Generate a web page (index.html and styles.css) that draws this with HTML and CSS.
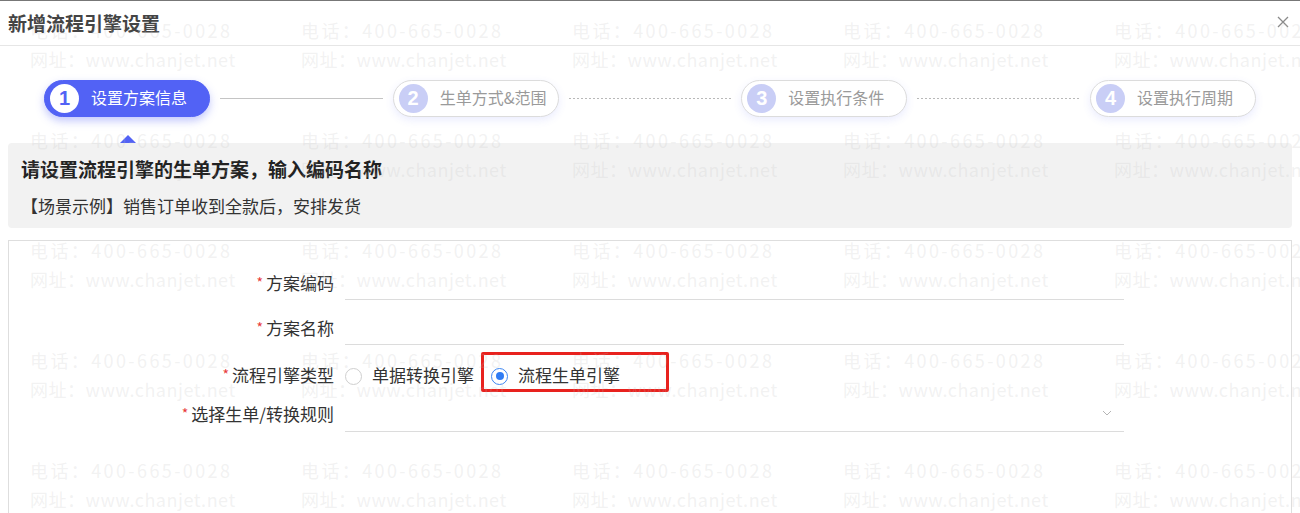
FILE: index.html
```html
<!DOCTYPE html>
<html lang="zh-CN">
<head>
    <meta charset="UTF-8">
    <title>新增流程引擎设置</title>
    <link rel="stylesheet" href="styles.css">
</head>
<body>
    <div class="dialog">
        <!-- Header -->
        <div class="dialog-header">
            <h1 class="dialog-title">新增流程引擎设置</h1>
            <button class="close-btn" aria-label="关闭">
                <svg width="12" height="12" viewBox="0 0 12 12"><path d="M1 1L11 11M11 1L1 11" stroke="#8a8a8a" stroke-width="1.3" fill="none"/></svg>
            </button>
        </div>

        <!-- Steps -->
        <div class="steps">
            <div class="step active"><span class="step-num">1</span><span class="step-text">设置方案信息</span></div>
            <div class="connector solid"></div>
            <div class="step"><span class="step-num">2</span><span class="step-text">生单方式&amp;范围</span></div>
            <div class="connector"></div>
            <div class="step"><span class="step-num">3</span><span class="step-text">设置执行条件</span></div>
            <div class="connector"></div>
            <div class="step"><span class="step-num">4</span><span class="step-text">设置执行周期</span></div>
        </div>

        <!-- Tip box -->
        <div class="tip-box">
            <div class="tip-title">请设置流程引擎的生单方案，输入编码名称</div>
            <div class="tip-desc">【场景示例】销售订单收到全款后，安排发货</div>
        </div>

        <!-- Form -->
        <div class="form-box">
            <div class="form-row">
                <label class="form-label"><i>*</i>方案编码</label>
                <div class="form-field"></div>
            </div>
            <div class="form-row">
                <label class="form-label"><i>*</i>方案名称</label>
                <div class="form-field"></div>
            </div>
            <div class="form-row radio-row">
                <label class="form-label"><i>*</i>流程引擎类型</label>
                <div class="radio-group">
                    <span class="radio-item"><span class="radio"></span>单据转换引擎</span>
                    <span class="radio-item highlight"><span class="radio checked"></span>流程生单引擎</span>
                </div>
            </div>
            <div class="form-row select-row">
                <label class="form-label"><i>*</i>选择生单/转换规则</label>
                <div class="form-field select">
                    <svg class="chevron" width="10" height="6" viewBox="0 0 10 6"><path d="M1 1L5 5L9 1" stroke="#b5b5b5" stroke-width="1" fill="none"/></svg>
                </div>
            </div>
        </div>
    </div>

    <!-- Watermark overlay -->
    <div class="watermark">
        <div class="wm"><span class="tel">电话：400-665-0028</span><span class="url">网址：www.chanjet.net</span></div>
        <div class="wm"><span class="tel">电话：400-665-0028</span><span class="url">网址：www.chanjet.net</span></div>
        <div class="wm"><span class="tel">电话：400-665-0028</span><span class="url">网址：www.chanjet.net</span></div>
        <div class="wm"><span class="tel">电话：400-665-0028</span><span class="url">网址：www.chanjet.net</span></div>
        <div class="wm"><span class="tel">电话：400-665-0028</span><span class="url">网址：www.chanjet.net</span></div>
        <div class="wm"><span class="tel">电话：400-665-0028</span><span class="url">网址：www.chanjet.net</span></div>
        <div class="wm"><span class="tel">电话：400-665-0028</span><span class="url">网址：www.chanjet.net</span></div>
        <div class="wm"><span class="tel">电话：400-665-0028</span><span class="url">网址：www.chanjet.net</span></div>
        <div class="wm"><span class="tel">电话：400-665-0028</span><span class="url">网址：www.chanjet.net</span></div>
        <div class="wm"><span class="tel">电话：400-665-0028</span><span class="url">网址：www.chanjet.net</span></div>
        <div class="wm"><span class="tel">电话：400-665-0028</span><span class="url">网址：www.chanjet.net</span></div>
        <div class="wm"><span class="tel">电话：400-665-0028</span><span class="url">网址：www.chanjet.net</span></div>
        <div class="wm"><span class="tel">电话：400-665-0028</span><span class="url">网址：www.chanjet.net</span></div>
        <div class="wm"><span class="tel">电话：400-665-0028</span><span class="url">网址：www.chanjet.net</span></div>
        <div class="wm"><span class="tel">电话：400-665-0028</span><span class="url">网址：www.chanjet.net</span></div>
        <div class="wm"><span class="tel">电话：400-665-0028</span><span class="url">网址：www.chanjet.net</span></div>
        <div class="wm"><span class="tel">电话：400-665-0028</span><span class="url">网址：www.chanjet.net</span></div>
        <div class="wm"><span class="tel">电话：400-665-0028</span><span class="url">网址：www.chanjet.net</span></div>
        <div class="wm"><span class="tel">电话：400-665-0028</span><span class="url">网址：www.chanjet.net</span></div>
        <div class="wm"><span class="tel">电话：400-665-0028</span><span class="url">网址：www.chanjet.net</span></div>
        <div class="wm"><span class="tel">电话：400-665-0028</span><span class="url">网址：www.chanjet.net</span></div>
        <div class="wm"><span class="tel">电话：400-665-0028</span><span class="url">网址：www.chanjet.net</span></div>
        <div class="wm"><span class="tel">电话：400-665-0028</span><span class="url">网址：www.chanjet.net</span></div>
        <div class="wm"><span class="tel">电话：400-665-0028</span><span class="url">网址：www.chanjet.net</span></div>
        <div class="wm"><span class="tel">电话：400-665-0028</span><span class="url">网址：www.chanjet.net</span></div>
    </div>
</body>
</html>
```

FILE: styles.css
```css
* {
    margin: 0;
    padding: 0;
    box-sizing: border-box;
}

body {
    font-family: "Noto Sans CJK SC", "Noto Sans", sans-serif;
    color: #333;
    background: #fff;
    overflow: hidden;
    height: 100vh;
}

.dialog {
    border-top: 1px solid #777;
    height: 100%;
    display: flex;
    flex-direction: column;
}

/* Header */
.dialog-header {
    height: 45px;
    flex-shrink: 0;
    border-bottom: 1px solid #e6e6e6;
    display: flex;
    align-items: center;
    justify-content: space-between;
    padding: 0 11px 0 8px;
}

.dialog-title {
    font-size: 19px;
    font-weight: bold;
    color: #444;
    line-height: 44px;
}

.close-btn {
    background: none;
    border: none;
    width: 12px;
    height: 12px;
    display: flex;
    margin-bottom: 2px;
}

/* Steps */
.steps {
    display: flex;
    align-items: center;
    padding: 34px 44px 0 44px;
}

.step {
    position: relative;
    width: 166px;
    height: 37px;
    border-radius: 19px;
    border: 1px solid #dcdcdc;
    background: #fff;
    display: flex;
    align-items: center;
    padding-left: 5px;
    box-shadow: 0 3px 8px rgba(82, 98, 245, 0.12);
    flex-shrink: 0;
}

.step-num {
    width: 29px;
    height: 29px;
    border-radius: 50%;
    background: #c9cef6;
    color: #fff;
    font-family: "Liberation Sans", Arial, sans-serif;
    font-weight: bold;
    font-size: 20px;
    display: flex;
    align-items: center;
    justify-content: center;
}

.step-text {
    margin-left: 12px;
    font-size: 16px;
    line-height: 22px;
    margin-bottom: 3px;
    color: #9a9a9a;
}

.step.active {
    background: #5262f5;
    border-color: #5262f5;
    box-shadow: 0 4px 9px rgba(82, 98, 245, 0.35);
}

.step.active .step-num {
    background: #fff;
    color: #5262f5;
}

.step.active .step-text {
    color: #fff;
}

.step.active::after {
    content: "";
    position: absolute;
    left: 75px;
    bottom: -27px;
    border-left: 8px solid transparent;
    border-right: 8px solid transparent;
    border-bottom: 8px solid #5262f5;
}

.connector {
    flex: 1;
    height: 1px;
    margin: 0 10px;
    background: repeating-linear-gradient(to right, #b8b8b8 0 2px, transparent 2px 4px);
}

.connector.solid {
    background: #c4c4c4;
}

/* Tip box */
.tip-box {
    margin: 26px 8px 0;
    background: #f2f2f2;
    border-radius: 4px;
    padding: 12px 13px 9px;
}

.tip-title {
    font-size: 19px;
    font-weight: bold;
    color: #222;
    line-height: 28px;
}

.tip-desc {
    font-size: 17px;
    color: #333;
    line-height: 26px;
    margin-top: 10px;
}

/* Form */
.form-box {
    flex: 1;
    margin: 12px 8px 0;
    border: 1px solid #dedede;
    border-bottom: none;
    padding-top: 14px;
    overflow: hidden;
}

.form-row {
    display: flex;
    align-items: flex-end;
    height: 45px;
}

.form-label {
    width: 325px;
    text-align: right;
    font-size: 17px;
    line-height: 24px;
    color: #333;
    padding-bottom: 5px;
    flex-shrink: 0;
}

.form-label i {
    font-style: normal;
    color: #e83a3a;
    font-size: 14px;
    margin-right: 3px;
    vertical-align: 2px;
}

.form-field {
    margin-left: 11px;
    width: 779px;
    height: 100%;
    border-bottom: 1px solid #dcdcdc;
    position: relative;
}

.radio-row {
    height: 43px;
}

.radio-row .form-label {
    padding-bottom: 1px;
}

.radio-group {
    margin-left: 11px;
    display: flex;
    align-items: center;
    padding-bottom: 1px;
    font-size: 17px;
    line-height: 24px;
}

.radio-item {
    display: flex;
    align-items: center;
    position: relative;
}

.radio-item + .radio-item {
    margin-left: 17px;
}

.radio {
    width: 17px;
    height: 17px;
    border-radius: 50%;
    border: 1px solid #cfcfcf;
    margin-right: 10px;
    margin-top: 2px;
    background: #fff;
    display: flex;
    align-items: center;
    justify-content: center;
}

.radio.checked {
    border-color: #3d86f2;
}

.radio.checked::after {
    content: "";
    width: 8px;
    height: 8px;
    border-radius: 50%;
    background: #2f7cf4;
}

.highlight::before {
    content: "";
    position: absolute;
    left: -10px;
    right: -49px;
    top: -11px;
    bottom: -5px;
    border: 3px solid #e8221e;
    border-radius: 2px;
}

.select-row {
    height: 44px;
}

.select-row .form-label {
    padding-bottom: 6px;
}

.chevron {
    position: absolute;
    right: 12px;
    top: 22px;
}

/* Watermark */
.watermark {
    position: absolute;
    top: 0;
    left: 0;
    right: 0;
    bottom: 0;
    overflow: hidden;
    padding: 16px 0 0 30px;
    display: grid;
    grid-template-columns: repeat(5, 271px);
    grid-auto-rows: 110px;
    pointer-events: none;
    z-index: 10;
    font-family: "Noto Sans CJK SC", "Noto Sans", sans-serif;
    font-size: 18px;
    color: rgba(190, 190, 190, 0.2);
}

.wm span {
    display: block;
    line-height: 29px;
    white-space: nowrap;
}

.wm .tel {
    letter-spacing: 2.4px;
}

.wm .url {
    letter-spacing: 0.5px;
}
```
